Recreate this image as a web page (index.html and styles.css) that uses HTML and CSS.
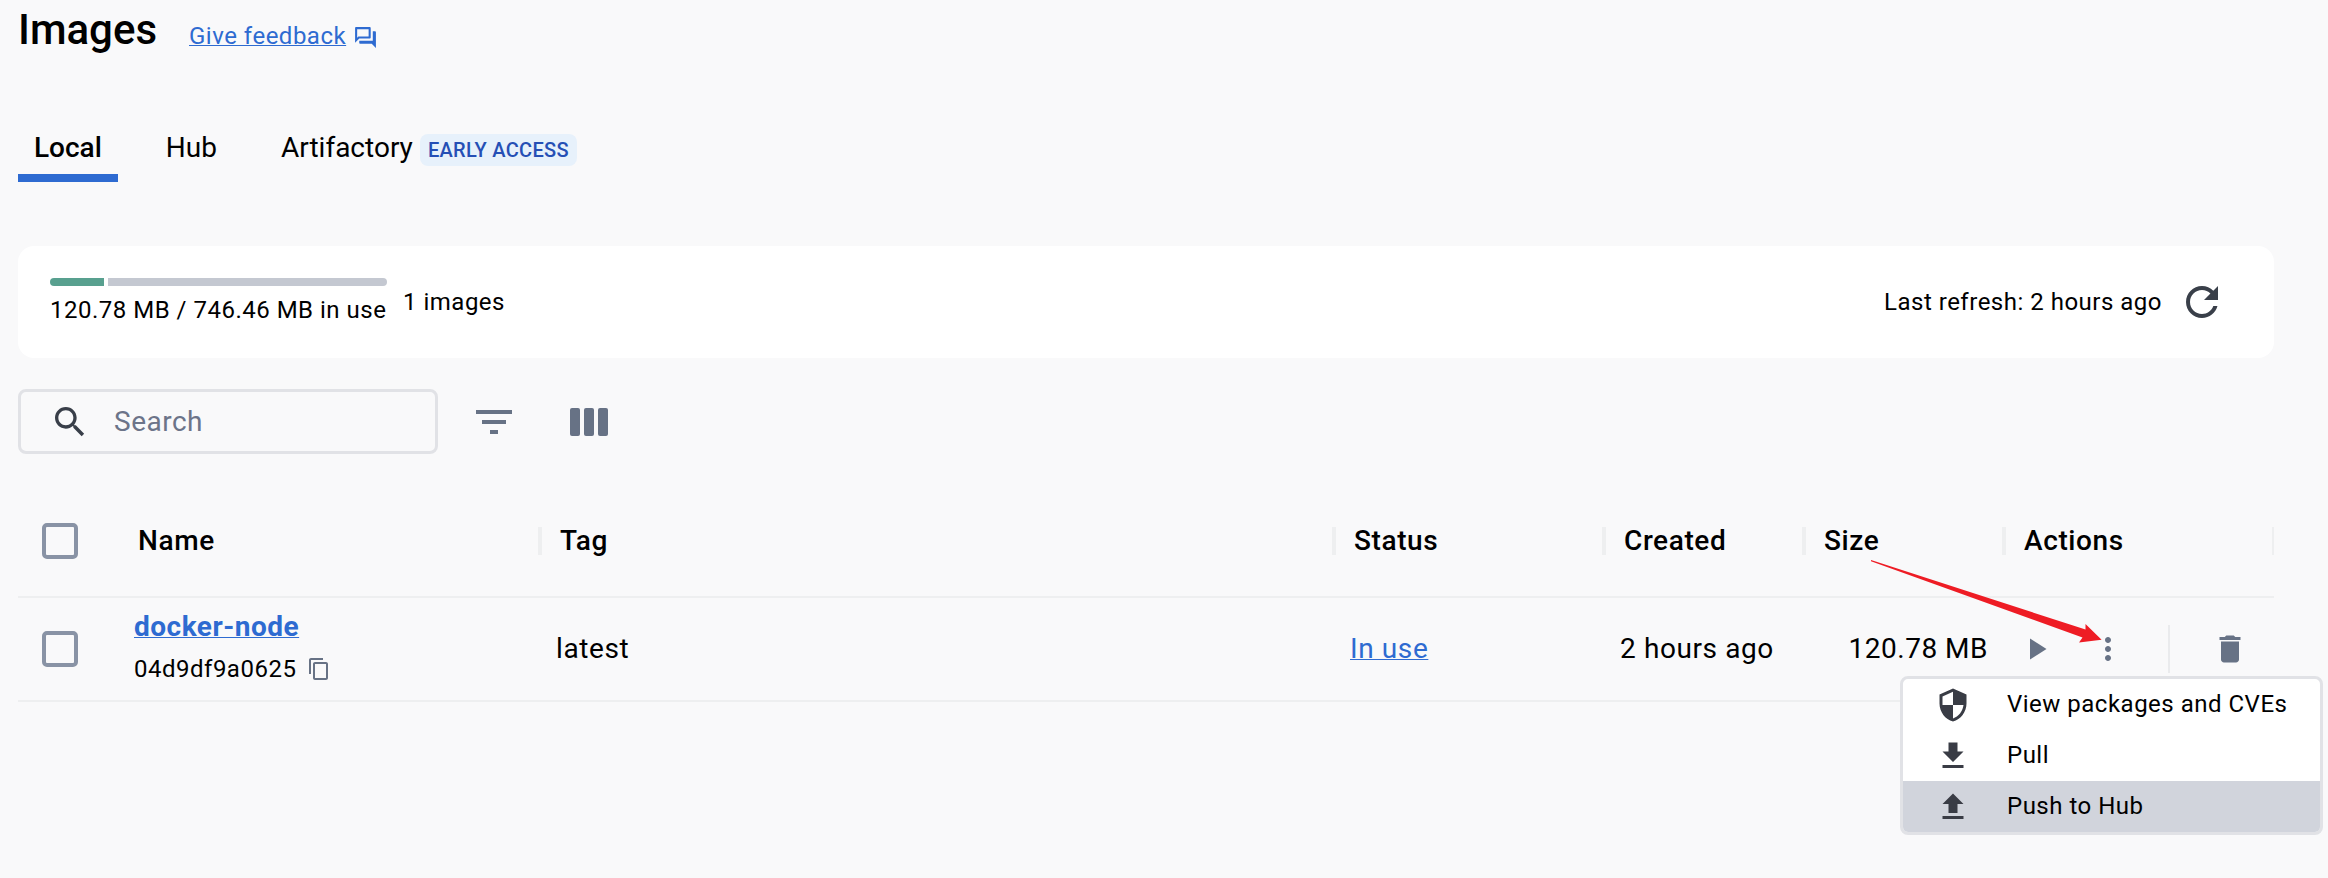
FILE: index.html
```html
<!DOCTYPE html>
<html lang="en">
<head>
<meta charset="utf-8">
<title>Images</title>
<link rel="stylesheet" href="styles.css">
</head>
<body>
<main class="page">
  <header class="head">
    <h1 class="title">Images</h1>
    <a class="link feedback">Give feedback</a>
    <svg class="feedback-icon" viewBox="0 0 24 24"><path d="M15 4v7H5.17L4 12.17V4h11m1-2H3c-.55 0-1 .45-1 1v14l4-4h10c.55 0 1-.45 1-1V3c0-.55-.45-1-1-1zm5 4h-2v9H6v2c0 .55.45 1 1 1h11l4 4V7c0-.55-.45-1-1-1z"/></svg>
  </header>

  <nav class="tabs">
    <span class="tab tab-active">Local</span>
    <span class="tab">Hub</span>
    <span class="tab">Artifactory<span class="badge">EARLY ACCESS</span></span>
  </nav>

  <section class="card">
    <div class="usage">
      <div class="bar"><i class="bar-used"></i><i class="bar-rest"></i></div>
      <span class="usage-text">120.78 MB / 746.46 MB in use</span>
    </div>
    <span class="count">1 images</span>
    <span class="refresh">Last refresh: 2 hours ago</span>
    <svg class="refresh-icon" viewBox="0 0 24 24"><path d="M17.65 6.35C16.2 4.9 14.21 4 12 4c-4.42 0-7.99 3.58-7.99 8s3.57 8 7.99 8c3.73 0 6.84-2.55 7.73-6h-2.08c-.82 2.33-3.04 4-5.65 4-3.31 0-6-2.69-6-6s2.69-6 6-6c1.66 0 3.14.69 4.22 1.78L13 11h7V4l-2.35 2.35z"/></svg>
  </section>

  <div class="toolbar">
    <div class="search">
      <svg class="search-icon" viewBox="0 0 24 24"><path d="M15.5 14h-.79l-.28-.27C15.41 12.59 16 11.11 16 9.5 16 5.91 13.09 3 9.5 3S3 5.91 3 9.5 5.91 16 9.5 16c1.61 0 3.09-.59 4.23-1.57l.27.28v.79l5 4.99L20.49 19l-4.99-5zm-6 0C7.01 14 5 11.99 5 9.5S7.01 5 9.5 5 14 7.01 14 9.5 11.99 14 9.5 14z"/></svg>
      <span>Search</span>
    </div>
    <svg class="filter-icon" viewBox="0 0 24 24"><path d="M10 18h4v-2h-4v2zM3 6v2h18V6H3zm3 7h12v-2H6v2z"/></svg>
    <div class="columns-icon"><i></i><i></i><i></i></div>
  </div>

  <section class="table">
    <div class="row row-head">
      <div class="cell-check"><i class="checkbox"></i></div>
      <div class="th th-name">Name</div>
      <div class="th">Tag</div>
      <div class="th">Status</div>
      <div class="th">Created</div>
      <div class="th">Size</div>
      <div class="th th-last">Actions</div>
    </div>
    <div class="row row-body">
      <div class="cell-check"><i class="checkbox"></i></div>
      <div class="td td-name">
        <a class="link name">docker-node</a>
        <div class="id"><span>04d9df9a0625</span><svg class="copy-icon" viewBox="0 0 24 24"><path d="M16 1H4c-1.100 0-2 .9-2 2v14h2V3h12V1zm3 4H8c-1.100 0-2 .9-2 2v14c0 1.100.9 2 2 2h11c1.100 0 2-.9 2-2V7c0-1.100-.9-2-2-2zm0 16H8V7h11v14z"/></svg></div>
      </div>
      <div class="td">latest</div>
      <div class="td"><a class="link">In use</a></div>
      <div class="td">2 hours ago</div>
      <div class="td td-size">120.78 MB</div>
      <div class="actions">
        <svg class="action" viewBox="0 0 24 24"><path d="M8 5v14l11-7z"/></svg>
        <svg class="action action-more" viewBox="0 0 24 24"><path d="M12 8c1.100 0 2-.9 2-2s-.9-2-2-2-2 .9-2 2 .9 2 2 2zm0 2c-1.100 0-2 .9-2 2s.9 2 2 2 2-.9 2-2-.9-2-2-2zm0 6c-1.100 0-2 .9-2 2s.9 2 2 2 2-.9 2-2-.9-2-2-2z"/></svg>
        <i class="divider"></i>
        <svg class="action" viewBox="0 0 24 24"><path d="M6 19c0 1.100.9 2 2 2h8c1.100 0 2-.9 2-2V7H6v12zM19 4h-3.500l-1-1h-5l-1 1H5v2h14V4z"/></svg>
      </div>
    </div>
  </section>
</main>

<div class="menu">
  <div class="menu-item"><svg viewBox="0 0 24 24"><path d="M12 1L3 5v6c0 5.550 3.840 10.740 9 12 5.160-1.260 9-6.450 9-12V5l-9-4zm0 10.990h7c-.53 4.120-3.280 7.790-7 8.940V12H5V6.300l7-3.110v8.800z"/></svg><span>View packages and CVEs</span></div>
  <div class="menu-item"><svg viewBox="0 0 24 24"><path d="M19 9h-4V3H9v6H5l7 7 7-7zM5 18v2h14v-2H5z"/></svg><span>Pull</span></div>
  <div class="menu-item menu-item-active"><svg viewBox="0 0 24 24"><path d="M9 16h6v-6h4l-7-7-7 7h4v6zm-4 2h14v2H5v-2z"/></svg><span>Push to Hub</span></div>
</div>

<svg class="arrow" viewBox="0 0 240 90"><path d="M1 0L215.500 69.500L215.500 64L231.600 79.800L209 82.500L212.500 77.500L1 1.300Z"/></svg>
</body>
</html>
```
FILE: styles.css
```css
* { box-sizing: border-box; }
body {
  margin: 0;
  background: #f9f9fa;
  color: #000;
  font-family: Roboto, "Liberation Sans", sans-serif;
  font-size: 28px;
  width: 2328px;
  height: 878px;
  overflow: hidden;
}
svg { display: block; flex: none; }
i { display: block; flex: none; }
.page { padding: 0 54px 0 18px; }
.link { color: #2e6bd1; text-decoration: underline; text-decoration-thickness: 2px; }

.head { display: flex; align-items: baseline; height: 134px; padding-top: 6px; }
.title { margin: 0; width: 171px; font-size: 42px; line-height: 48px; font-weight: 500; }
.feedback { font-size: 24px; letter-spacing: 0.5px; text-decoration-thickness: 1px; }
.feedback-icon { width: 25px; height: 25px; margin-left: 7px; align-self: flex-start; margin-top: 19px; fill: #2e6bd1; }

.tabs { display: flex; height: 48px; margin-bottom: 64px; }
.tab { display: flex; padding: 0 16px; margin-right: 32px; line-height: 28px; }
.tab-active { font-weight: 500; border-bottom: 8px solid #2e6bd1; }
.badge { margin-left: 7px; height: 32px; padding: 0 8px; border-radius: 8px; background: #e7f1fb; color: #254fb5; font-size: 20px; font-weight: 500; line-height: 32px; letter-spacing: 0.3px; }

.card { display: flex; align-items: center; height: 112px; border-radius: 16px; background: #fff; padding: 0 48px 0 32px; font-size: 24px; letter-spacing: 0.5px; }
.usage { width: 337px; white-space: nowrap; margin-bottom: 2px; }
.bar { display: flex; gap: 4px; margin-bottom: 10px; }
.bar-used { width: 54px; height: 8px; background: #58a08f; border-radius: 4px 0 0 4px; }
.bar-rest { flex: 1; height: 8px; background: #c4c8d1; border-radius: 0 4px 4px 0; }
.usage-text { display: block; line-height: 28px; }
.count { margin-left: 16px; }
.refresh { margin-left: auto; margin-right: 16px; }
.refresh-icon { width: 48px; height: 48px; fill: #393f49; }

.toolbar { display: flex; align-items: center; height: 65px; margin: 31px 0 31px; }
.search { display: flex; align-items: center; width: 420px; height: 65px; border: 3px solid #e1e2e6; border-radius: 8px; padding-left: 29px; color: #6c7489; letter-spacing: 0.5px; }
.search-icon { width: 40px; height: 40px; margin-right: 24px; fill: #393f49; }
.filter-icon { width: 48px; height: 48px; margin-left: 32px; fill: #677285; }
.columns-icon { display: flex; gap: 4px; margin-left: 52px; }
.columns-icon i { width: 10px; height: 28px; border-radius: 2px; background: #677285; }

.row { display: grid; grid-template-columns: 116px 406px 794px 270px 200px 200px 270px; align-items: center; border-bottom: 2px solid #eeeff0; }
.row-head { height: 113px; }
.row-body { height: 104px; }
.cell-check { padding-left: 24px; }
.checkbox { width: 36px; height: 36px; border: 4px solid #8993a5; border-radius: 5px; }
.th { display: flex; align-items: center; height: 28px; padding-left: 18px; margin-left: -2px; border-left: 4px solid #eeeff0; font-weight: 500; letter-spacing: 0.6px; }
.th-name { border: 0; padding-left: 6px; }
.th-last { border-right: 2px solid #eeeff0; }
.td { padding-left: 16px; padding-bottom: 2px; letter-spacing: 0.6px; white-space: nowrap; }
.td .link { text-decoration-thickness: 1px; }
.td-name { padding-left: 0; padding-bottom: 4px; }
.name { display: block; font-weight: 700; line-height: 34px; letter-spacing: 0.5px; }
.id { display: flex; align-items: center; margin-top: 9px; font-size: 24px; line-height: 32px; letter-spacing: 0.5px; }
.copy-icon { width: 24px; height: 24px; margin-left: 11px; fill: #677285; }
.td-size { text-align: right; padding-right: 16px; letter-spacing: 0.5px; }
.actions { display: flex; align-items: center; padding-left: 14px; }
.action { width: 36px; height: 36px; fill: #677285; }
.action-more { margin-left: 36px; }
.divider { width: 2px; height: 48px; margin: 0 42px; background: #eaebed; }

/* Context menu opened from the row's overflow button */
.menu { position: absolute; left: 1900px; top: 676px; width: 423px; border: 3px solid #e1e2e6; border-radius: 8px; background: #fff; overflow: hidden; font-size: 24px; letter-spacing: 0.5px; }
.menu-item { display: flex; align-items: center; height: 51px; padding-left: 31.5px; }
.menu-item span { padding-bottom: 2px; }
.menu-item svg { width: 36px; height: 36px; margin-right: 36.5px; fill: #393c45; }
.menu-item-active { background: #d1d4dc; }

.arrow { position: absolute; left: 1870px; top: 560px; width: 240px; height: 90px; fill: #ee1c24; }
```
